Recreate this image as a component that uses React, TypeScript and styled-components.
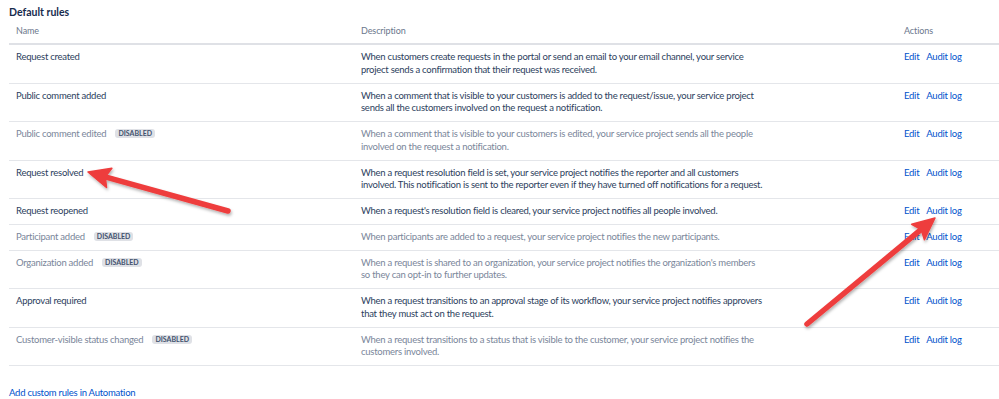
import React from "react";
import styled, { createGlobalStyle } from "styled-components";

const GlobalStyle = createGlobalStyle`
  html, body {
    margin: 0;
    padding: 0;
    background: #ffffff;
  }
  body {
    font-family: Lato, "Open Sans", sans-serif;
    font-size: 9.5px;
    letter-spacing: -0.25px;
    color: #172b4d;
  }
`;

const Page = styled.div`
  position: relative;
  width: 999px;
  height: 399px;
  overflow: hidden;
  padding: 6px 0 0 9px;
  box-sizing: border-box;
`;

const Title = styled.h2`
  margin: 0;
  font-size: 10.5px;
  font-weight: 700;
  line-height: 13px;
  letter-spacing: 0;
  color: #172b4d;
`;

const Table = styled.div`
  display: grid;
  grid-template-columns: 345px 545px 1fr;
`;

const HeadCell = styled.div<{ $last?: boolean }>`
  padding: 6px 7px 6px;
  padding-left: ${(p) => (p.$last ? "5px" : "7px")};
  font-size: 9px;
  line-height: 12px;
  letter-spacing: -0.1px;
  color: #6b778c;
  border-bottom: 2px solid #dfe1e6;
`;

const Cell = styled.div<{ $muted?: boolean }>`
  padding: 6px 7px 6px;
  line-height: 12.75px;
  border-bottom: 1px solid #e4e6ea;
  color: ${(p) => (p.$muted ? "#7a869a" : "#2c3e5d")};
`;

const NameCell = styled(Cell)`
  display: flex;
  align-items: flex-start;
  gap: 9px;
`;

const ActionsCell = styled(Cell)`
  padding-left: 5px;
  display: flex;
  gap: 7px;
`;

const Lozenge = styled.span`
  display: inline-block;
  background: #dfe1e6;
  color: #42526e;
  border-radius: 3px;
  font-size: 7px;
  font-weight: 700;
  line-height: 9px;
  padding: 0 3px;
  margin-top: 1px;
  letter-spacing: 0;
`;

const Link = styled.a`
  color: #0052cc;
  text-decoration: none;
  cursor: pointer;
`;

const Footer = styled.div`
  margin-top: 20px;
  line-height: 13px;
`;

const Annotations = styled.svg`
  position: absolute;
  left: 0;
  top: 0;
  pointer-events: none;
`;

type Rule = {
  name: string;
  disabled?: boolean;
  lines: string[];
};

const rules: Rule[] = [
  {
    name: "Request created",
    lines: [
      "When customers create requests in the portal or send an email to your email channel, your service",
      "project sends a confirmation that their request was received.",
    ],
  },
  {
    name: "Public comment added",
    lines: [
      "When a comment that is visible to your customers is added to the request/issue, your service project",
      "sends all the customers involved on the request a notification.",
    ],
  },
  {
    name: "Public comment edited",
    disabled: true,
    lines: [
      "When a comment that is visible to your customers is edited, your service project sends all the people",
      "involved on the request a notification.",
    ],
  },
  {
    name: "Request resolved",
    lines: [
      "When a request resolution field is set, your service project notifies the reporter and all customers",
      "involved. This notification is sent to the reporter even if they have turned off notifications for a request.",
    ],
  },
  {
    name: "Request reopened",
    lines: ["When a request's resolution field is cleared, your service project notifies all people involved."],
  },
  {
    name: "Participant added",
    disabled: true,
    lines: ["When participants are added to a request, your service project notifies the new participants."],
  },
  {
    name: "Organization added",
    disabled: true,
    lines: [
      "When a request is shared to an organization, your service project notifies the organization's members",
      "so they can opt-in to further updates.",
    ],
  },
  {
    name: "Approval required",
    lines: [
      "When a request transitions to an approval stage of its workflow, your service project notifies approvers",
      "that they must act on the request.",
    ],
  },
  {
    name: "Customer-visible status changed",
    disabled: true,
    lines: [
      "When a request transitions to a status that is visible to the customer, your service project notifies the",
      "customers involved.",
    ],
  },
];

const Arrow = ({ x1, y1, x2, y2 }: { x1: number; y1: number; x2: number; y2: number }) => {
  // tail (x1,y1) -> tip (x2,y2)
  const dx = x2 - x1;
  const dy = y2 - y1;
  const len = Math.sqrt(dx * dx + dy * dy);
  const ux = dx / len;
  const uy = dy / len;
  const headLen = 22;
  const headW = 10;
  const bx = x2 - ux * headLen;
  const by = y2 - uy * headLen;
  const px = -uy;
  const py = ux;
  const head = `${x2},${y2} ${bx + px * headW},${by + py * headW} ${bx + ux * 4},${by + uy * 4} ${bx - px * headW},${by - py * headW}`;
  return (
    <g filter="url(#shadow)">
      <line x1={x1} y1={y1} x2={bx + ux * 6} y2={by + uy * 6} stroke="#ee3e3e" strokeWidth={5.5} strokeLinecap="round" />
      <polygon points={head} fill="#ee3e3e" stroke="#ee3e3e" strokeWidth={1.5} strokeLinejoin="round" />
    </g>
  );
};

export default function App() {
  return (
    <Page>
      <GlobalStyle />
      <Title>Default rules</Title>
      <Table>
        <HeadCell>Name</HeadCell>
        <HeadCell>Description</HeadCell>
        <HeadCell $last>Actions</HeadCell>
        {rules.map((r) => (
          <React.Fragment key={r.name}>
            <NameCell $muted={r.disabled}>
              <span>{r.name}</span>
              {r.disabled && <Lozenge>DISABLED</Lozenge>}
            </NameCell>
            <Cell $muted={r.disabled}>
              {r.lines.map((l, i) => (
                <div key={i}>{l}</div>
              ))}
            </Cell>
            <ActionsCell>
              <Link>Edit</Link>
              <Link>Audit log</Link>
            </ActionsCell>
          </React.Fragment>
        ))}
      </Table>
      <Footer>
        <Link>Add custom rules in Automation</Link>
      </Footer>
      <Annotations width={999} height={399}>
        <defs>
          <filter id="shadow" x="-20%" y="-20%" width="140%" height="140%">
            <feDropShadow dx="1" dy="2" stdDeviation="1.5" floodColor="#000" floodOpacity="0.3" />
          </filter>
        </defs>
        <Arrow x1={228} y1={211} x2={88} y2={172} />
        <Arrow x1={807} y1={324} x2={935} y2={218} />
      </Annotations>
    </Page>
  );
}
